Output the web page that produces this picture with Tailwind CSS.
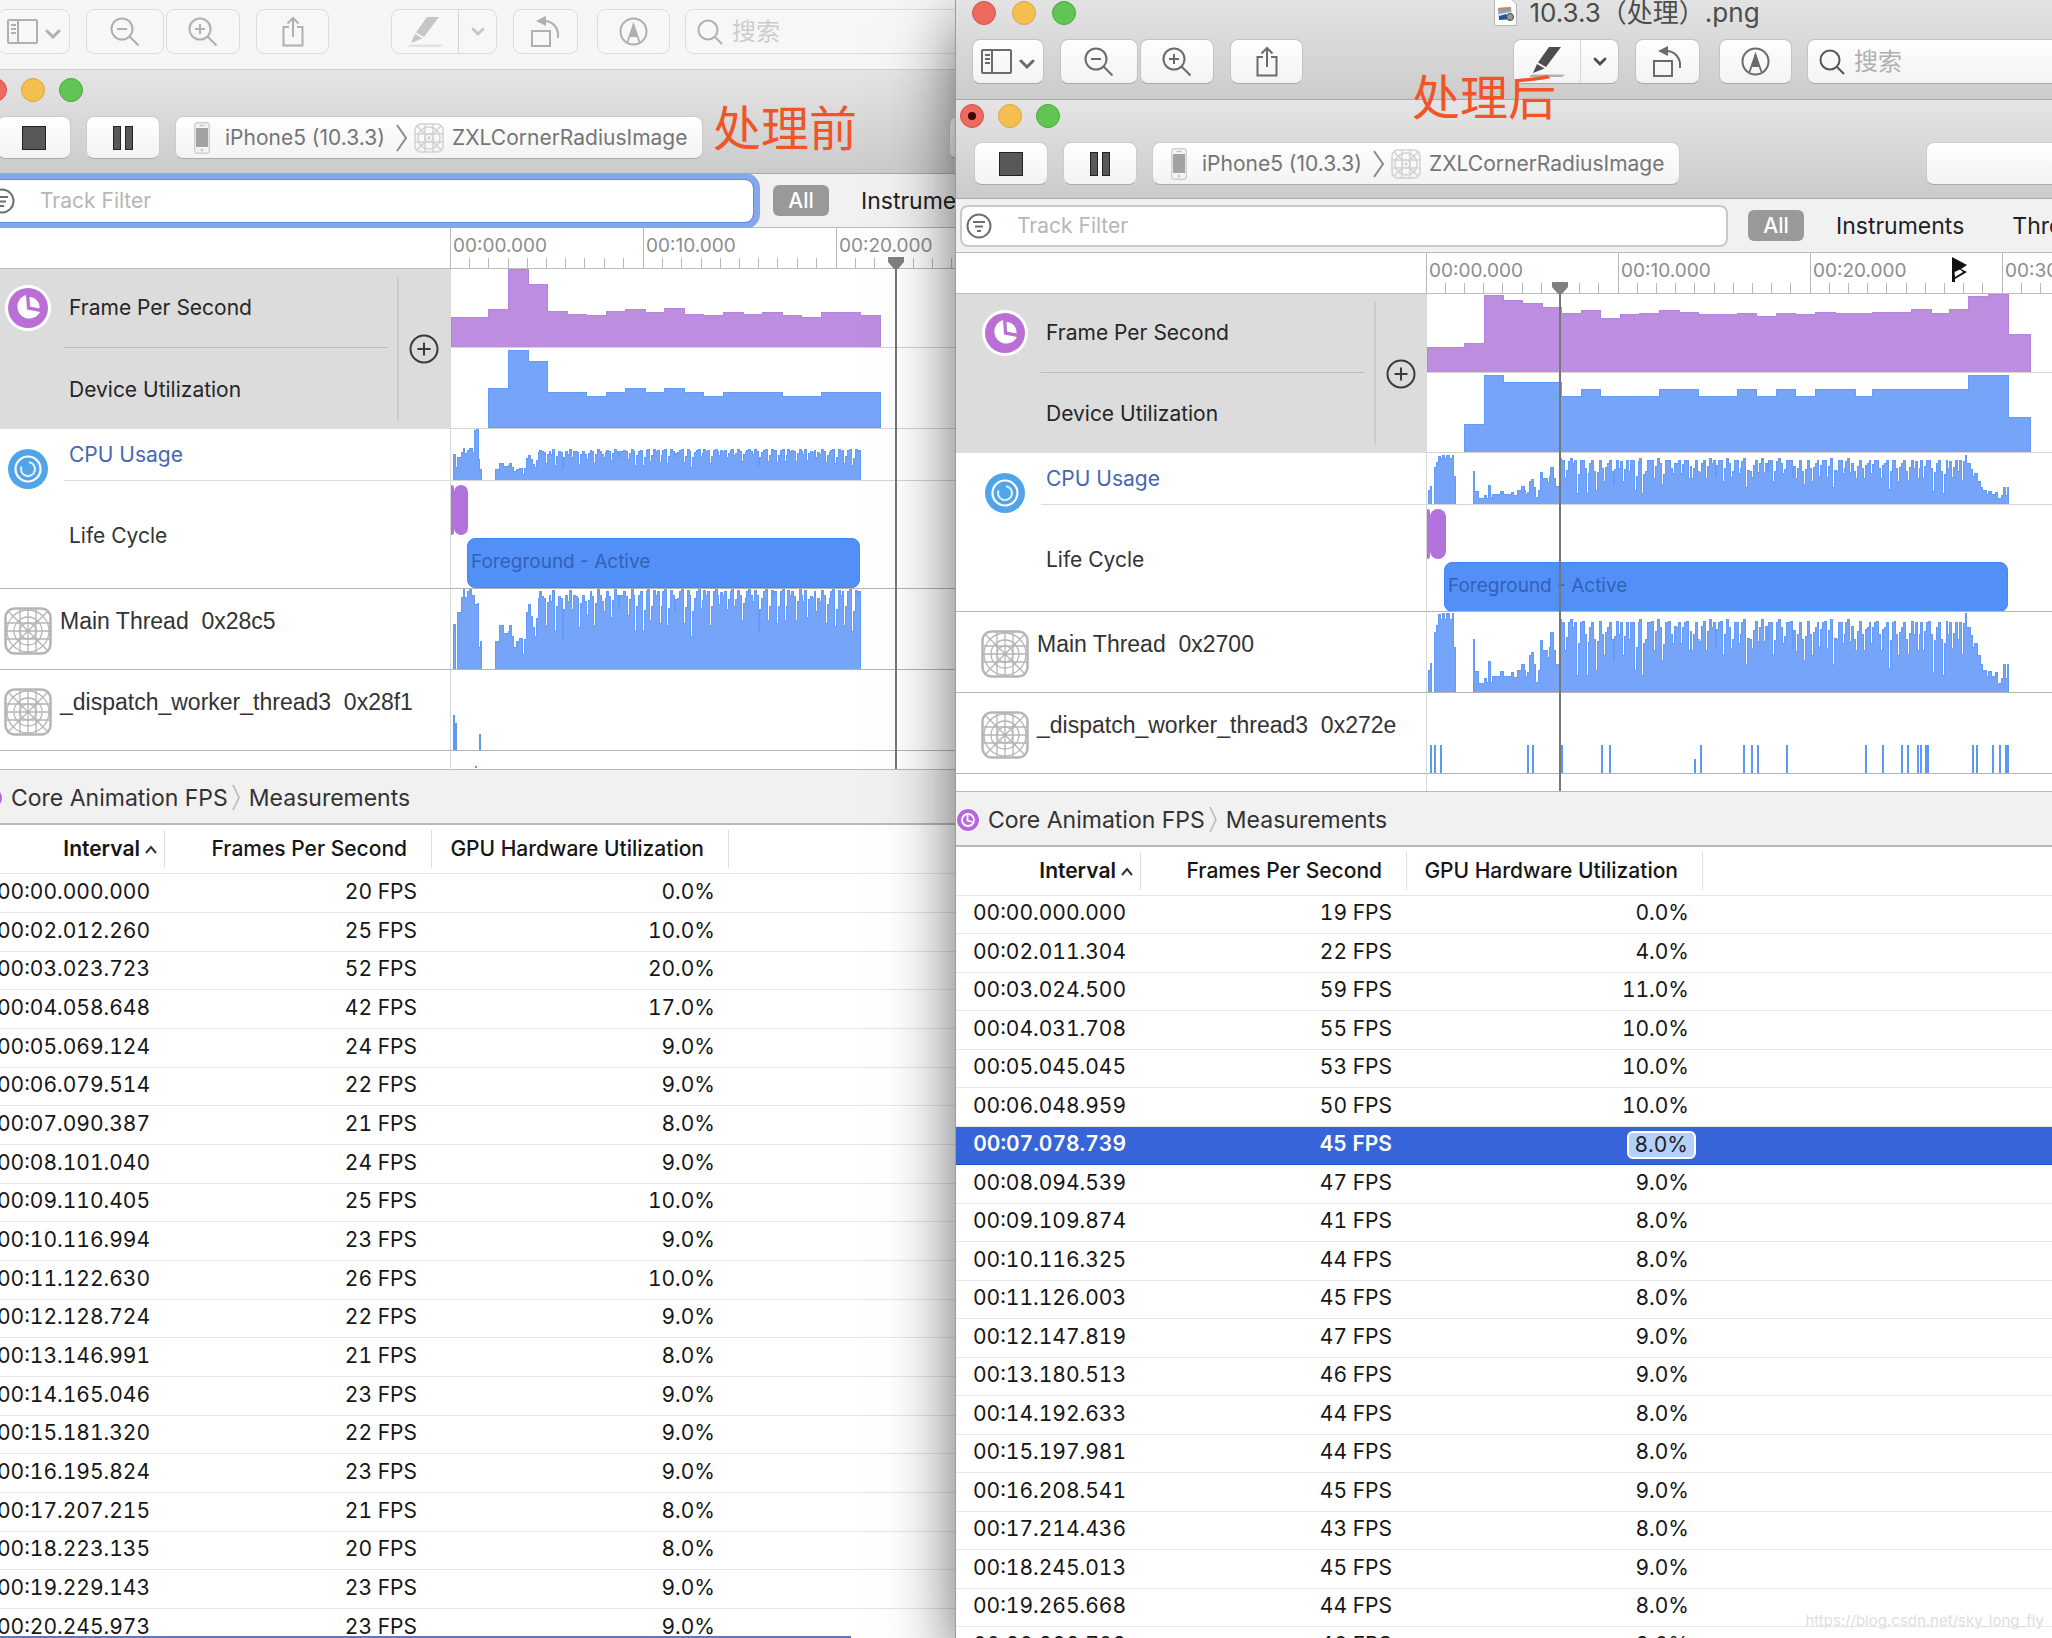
<!DOCTYPE html>
<html lang="zh-CN">
<head>
<meta charset="utf-8">
<meta name="viewport" content="width=device-width, initial-scale=1">
<title>10.3.3（处理）.png</title>
<script src="https://cdn.jsdelivr.net/npm/@tailwindcss/browser@4"></script>
</head>
<body class="bg-white font-['Inter','Noto_Sans_CJK_SC',sans-serif] text-[21px] leading-6 text-[#262626]">

<!-- Shared icons -->
<svg class="hidden" aria-hidden="true">
  <symbol id="i-sidebar" viewBox="0 0 54 26"><g fill="none" stroke="currentColor" stroke-width="2"><rect x="1" y="1" width="29" height="23" rx="1"/><path d="M11 1V24M4 6h5M4 10h5M4 14h5" /><path d="M40 12l6 6 6-6" stroke-width="3" stroke-linecap="round"/></g></symbol>
  <symbol id="i-zoomout" viewBox="0 0 30 30"><g fill="none" stroke="currentColor" stroke-width="2"><circle cx="12" cy="12" r="10.5"/><path d="M7 12h10M19.500 19.500L28.500 28.500" /></g></symbol>
  <symbol id="i-zoomin" viewBox="0 0 30 30"><g fill="none" stroke="currentColor" stroke-width="2"><circle cx="12" cy="12" r="10.500"/><path d="M7 12h10M12 7v10M19.500 19.500L28.500 28.500"/></g></symbol>
  <symbol id="i-search" viewBox="0 0 26 26"><g fill="none" stroke="currentColor" stroke-width="2"><circle cx="11" cy="11" r="9.500"/><path d="M17.500 17.500L25 25"/></g></symbol>
  <symbol id="i-share" viewBox="0 0 22 31"><path d="M7 11H1.500V29.500H20.500V11H15M11 21V2M5.500 7.500L11 2L16.500 7.500" fill="none" stroke="currentColor" stroke-width="2"/></symbol>
  <symbol id="i-marker" viewBox="0 0 36 30"><path d="M20 0H32L17 20L9 15.500Z" fill="currentColor"/><path d="M8 17L15.500 21.500L4 26Z" fill="currentColor"/><path d="M3 27.500H36L33 30H0Z" fill="currentColor" opacity=".4"/></symbol>
  <symbol id="i-down" viewBox="0 0 14 9"><path d="M2 2l5 5 5-5" fill="none" stroke="currentColor" stroke-width="2.800" stroke-linecap="round"/></symbol>
  <symbol id="i-rotate" viewBox="0 0 29 31"><g fill="none" stroke="currentColor" stroke-width="2"><rect x="1" y="15" width="18" height="15"/><path d="M13 5C22 5 28 12 27 22"/></g><path d="M5 5L15 0V10Z" fill="currentColor"/></symbol>
  <symbol id="i-markup" viewBox="0 0 29 29"><g fill="none" stroke="currentColor" stroke-width="2"><circle cx="14.500" cy="14.500" r="13"/><path d="M8.500 25L14.500 8L20.500 25M11 19H18" stroke-width="1.800"/></g><path d="M14.500 5L18.500 19H10.500Z" fill="currentColor"/></symbol>
  <symbol id="i-filter" viewBox="0 0 26 26"><g fill="none" stroke="currentColor" stroke-width="2"><circle cx="13" cy="13" r="11.500"/><path d="M7 9h12M9 13.500h8M11 18h4"/></g></symbol>
  <symbol id="i-phone" viewBox="0 0 16 32"><rect x=".7" y=".7" width="14.600" height="30.600" rx="3" fill="#f4f4f4" stroke="#cfcfcf" stroke-width="1.400"/><rect x="2" y="6" width="12" height="19" fill="#a2a2a2"/><path d="M5.500 3.500h5" stroke="#bbb" stroke-width="1.200"/><circle cx="8" cy="28" r="1.500" fill="#ccc"/></symbol>
  <symbol id="i-app" viewBox="0 0 48 48"><g fill="none" stroke="currentColor"><rect x="1.500" y="1.500" width="45" height="45" rx="9" stroke-width="2.500"/><g stroke-width="1.300"><path d="M16 1V47M24 1V47M32 1V47M1 16H47M1 24H47M1 32H47M4 4L44 44M44 4L4 44"/><circle cx="24" cy="24" r="21"/><circle cx="24" cy="24" r="14"/><circle cx="24" cy="24" r="8"/></g></g></symbol>
  <symbol id="i-appsmall" viewBox="0 0 30 30"><g fill="none" stroke="currentColor" stroke-width="1.500"><rect x="1" y="1" width="28" height="28" rx="6"/><path d="M11 1V29M19 1V29M1 11H29M1 19H29M3 3L10 10M27 3L20 10M3 27L10 20M27 27L20 20"/><circle cx="15" cy="15" r="11"/><circle cx="15" cy="15" r="4"/><circle cx="15" cy="15" r="1"/></g></symbol>
  <symbol id="i-fps" viewBox="0 0 46 46"><circle cx="23" cy="23" r="23" fill="#fff"/><circle cx="23" cy="23" r="20" fill="#bb6fd6"/><path d="M21 10A12 12 0 1 0 35 27L22 24.500Z" fill="#fff"/><path d="M24.500 12A10.500 10.500 0 0 1 34.500 23.500L25 21.500Z" fill="#fff"/></symbol>
  <symbol id="i-fpssmall" viewBox="0 0 24 24"><circle cx="12" cy="12" r="12" fill="#fff"/><circle cx="12" cy="12" r="11" fill="#b768dc"/><circle cx="12" cy="12" r="6" fill="none" stroke="#fff" stroke-width="1.800"/><path d="M11.500 6.500V12.500L16.500 14" fill="none" stroke="#fff" stroke-width="1.800"/></symbol>
  <symbol id="i-cpu" viewBox="0 0 40 40"><circle cx="20" cy="20" r="20" fill="#52a4e9"/><g fill="none" stroke="#fff"><circle cx="20" cy="20" r="12.500" stroke-width="2.200"/><path d="M13.500 17.500A7 7 0 1 0 21 13.200" stroke-width="2" opacity=".85"/></g></symbol>
  <symbol id="i-plus" viewBox="0 0 30 30"><g fill="none" stroke="currentColor" stroke-width="2"><circle cx="15" cy="15" r="13.500"/><path d="M8.500 15h13M15 8.500v13"/></g></symbol>
</svg>

<main class="grid h-screen grid-cols-[956fr_1096fr] grid-rows-[minmax(0,1fr)] overflow-hidden">
  <section id="before" class="relative flex min-w-0 flex-col overflow-hidden bg-white" aria-label="处理前"></section>
  <section id="after" class="relative z-10 flex min-w-0 flex-col bg-white shadow-[0_24px_64px_rgba(0,0,0,0.6)] ring-1 ring-[#9a9a9a]" aria-label="处理后"></section>
</main>

<script>
const icon = (id, cls) => `<svg class="${cls}" aria-hidden="true"><use href="#${id}"/></svg>`;

// ---- Preview toolbar -------------------------------------------------
function previewBar(active) {
  const btn = active
    ? 'flex h-[45px] shrink-0 items-center justify-center rounded-lg border border-[#c3c3c3] border-b-[#a9a9a9] bg-linear-to-b from-[#fefefe] to-[#f3f3f3] text-[#6b6b6b]'
    : 'flex h-[45px] shrink-0 items-center justify-center rounded-lg border border-[#dcdcdc] bg-[#f7f7f7] text-[#b0b0b0]';
  const dark = active ? 'text-[#4d4d4d]' : 'text-[#c6c6c6]';
  return `
  <div class="flex items-center ${active ? 'pl-4' : '-ml-0.5'}">
    <button aria-label="边栏" class="${btn} w-[72px]">${icon('i-sidebar', 'h-[26px] w-[54px]')}</button>
    <button aria-label="缩小" class="${btn} ml-4 w-[78px]">${icon('i-zoomout', 'size-[30px]')}</button>
    <button aria-label="放大" class="${btn} ml-0.5 w-[74px]">${icon('i-zoomin', 'size-[30px]')}</button>
    <button aria-label="共享" class="${btn} ml-4 w-[73px]">${icon('i-share', 'h-[31px] w-[22px]')}</button>
    <div class="${btn} ${active ? 'ml-[210px]' : 'ml-[62px]'} w-[106px]">
      <button aria-label="高亮" class="flex h-full w-[67px] items-center justify-center border-r border-[#d6d6d6] ${dark}">${icon('i-marker', 'h-[30px] w-[36px]')}</button>
      <button aria-label="高亮颜色" class="flex h-full flex-1 items-center justify-center ${dark}">${icon('i-down', 'h-[9px] w-[14px]')}</button>
    </div>
    <button aria-label="旋转" class="${btn} ml-4 w-[65px]">${icon('i-rotate', 'h-[31px] w-[29px]')}</button>
    <button aria-label="标记" class="${btn} ml-[19px] w-[73px]">${icon('i-markup', 'size-[29px]')}</button>
    <label class="${btn} relative ml-[15px] w-[400px] justify-start gap-[9px] pl-[11px] ${active ? 'text-[#555555]' : 'text-[#aaaaaa]'}">
      ${icon('i-search', 'size-[26px] shrink-0')}
      <input type="search" placeholder="搜索" class="w-full bg-transparent text-[24px] outline-none ${active ? 'placeholder:text-[#b0b0b0]' : 'placeholder:text-[#cccccc]'}">
    </label>
  </div>`;
}

// ---- Track graphs ----------------------------------------------------
// points: [x, height]; the last point closes the area.
function steps(points, base) {
  let d = `M${points[0][0]} ${base}`;
  points.forEach(([x, h], i) => {
    d += `V${(base - h).toFixed(1)}`;
    if (points[i + 1]) d += `H${points[i + 1][0].toFixed(1)}`;
  });
  return d + `V${base}Z`;
}
const area = (d, fill, stroke) =>
  `<svg class="block h-full w-full" aria-hidden="true"><path d="${d}" fill="${fill}" stroke="${stroke}" shape-rendering="crispEdges"/></svg>`;

function spread(valleys, from, to, step, base, high) {
  const out = [];
  let n = 0;
  for (let x = from; x < to; x += step) {
    const v = valleys.find(([vx]) => Math.abs(vx - x) <= step / 2);
    const after = valleys.find(([vx]) => x - vx > step / 2 && x - vx <= step * 1.5);
    if (v) out.push([x, base - v[1]]);
    else if (after) out.push([x, base - (high[n % high.length] + after[1]) / 2 + 14]);
    else out.push([x, base - high[n % high.length]]);
    n++;
  }
  return out;
}

// Load samples, in graph units
const loadBefore = (() => {
  const head = [[168,1158],[178,1112],[190,1135],[206,1128],[210,1112],[214,1145],[222,1175],[231,1158],[238,1150],[247,1198],[255,1152],[261,1072],[266,1050],[271,1085],[278,1118],[284,1145],[289,1090],[295,1032]].map(([x, y]) => [x, 1240 - y]);
  const valleys = [[315,1110],[344,1130],[366,1152],[396,1065],[418,1117],[442,1082],[465,1110],[488,1070],[511,1088],[538,1065],[565,1082],[587,1130],[610,1130],[633,1095],[656,1105],[680,1112],[705,1070],[731,1105],[755,1145],[783,1060],[807,1110],[835,1050],[858,1065],[882,1055],[906,1095],[957,1130],[983,1095],[1009,1105],[1036,1095],[1068,1095],[1102,1088],[1131,1070],[1155,1105],[1184,1115],[1212,1110],[1236,1130]];
  const pts = head.concat(spread(valleys, 300, 1258, 5.6, 1240, [1010, 1024, 1030, 1012, 1003, 1022, 1040, 1008, 1022]));
  pts.push([1261, 0]);
  return pts.map(([x, h]) => [(x - 34) / 3, h / 2.958]);
})();
const startBefore = [[40,1107],[46,1240],[52,1072],[64,1028],[70,1005],[75,1028],[82,1010],[88,1003],[96,1022],[104,1050],[112,1045],[116,1175],[121,1158],[125,1240]].map(([x, y]) => [(x - 34) / 3, (1240 - y) / 2.958]);
const startBeforeCpu = [[40,605],[46,645],[52,615],[64,600],[70,590],[75,602],[82,596],[88,590],[98,600],[105,535],[111,530],[115,622],[120,650],[125,682]].map(([x, y]) => [(x - 34) / 3, (682 - y) / 2.958]);

const loadAfter = (() => {
  const px = ([x, h]) => [(x - 42) / 2.442, h / 2.8];
  const head = [[155,1120],[158,1208],[167,1243],[182,1228],[187,1240],[193,1180],[197,1238],[203,1222],[222,1208],[228,1222],[248,1212],[254,1226],[262,1205],[272,1188],[279,1205],[283,1222],[288,1212],[292,1165],[297,1155],[301,1190],[307,1238],[313,1205],[318,1122],[325,1150],[335,1170],[340,1140],[343,1100],[350,1150],[356,1188],[366,1062],[371,1070]].map(([x, y]) => [x, 1266 - y]);
  const valleys = [[381,1150],[405,1220],[429,1220],[452,1205],[475,1165],[496,1180],[520,1165],[546,1205],[569,1220],[593,1150],[616,1178],[640,1130],[663,1130],[678,1150],[690,1150],[706,1125],[722,1150],[745,1140],[762,1165],[785,1145],[800,1130],[819,1190],[835,1145],[850,1125],[864,1125],[888,1165],[911,1130],[932,1145],[943,1152],[962,1178],[980,1165],[1000,1140],[1017,1145],[1034,1190],[1055,1130],[1074,1125],[1090,1150],[1107,1150],[1128,1130],[1149,1150],[1169,1200],[1190,1165],[1213,1160],[1237,1150],[1255,1150],[1278,1210],[1301,1220],[1325,1145],[1347,1160]];
  const tail = [[1353,1075],[1357,1045],[1360,1085],[1368,1108],[1373,1140],[1379,1130],[1385,1165],[1393,1190],[1398,1206],[1405,1205],[1409,1222],[1414,1208],[1420,1222],[1430,1212],[1434,1242],[1446,1228],[1450,1190],[1454,1228],[1459,1190],[1462,1266]].map(([x, y]) => [x, 1266 - y]);
  return head.concat(spread(valleys, 374, 1352, 4.7, 1266, [1070, 1068, 1105, 1072, 1062, 1085, 1070, 1118, 1070]), tail).map(px);
})();
const startAfter = [[46,1205],[50,1185],[54,1266],[60,1100],[66,1080],[70,1050],[75,1062],[80,1045],[85,1062],[90,1045],[96,1062],[103,1045],[106,1142],[111,1266]].map(([x, y]) => [(x - 42) / 2.442, (1266 - y) / 2.8]);

const BLUE = '#75a4f8', BLUE_EDGE = '#629bfa', PURPLE = '#bd8de0', PURPLE_EDGE = '#b783dd';

const before = {
  active: false, pxPerSec: 19.3, fpsUnit: 1.5, gpuUnit: 3.85, end: 22.3,
  rows: [[0,'00:00.000.000',20,0],[2.012,'00:02.012.260',25,10],[3.024,'00:03.023.723',52,20],[4.059,'00:04.058.648',42,17],[5.069,'00:05.069.124',24,9],[6.08,'00:06.079.514',22,9],[7.09,'00:07.090.387',21,8],[8.101,'00:08.101.040',24,9],[9.11,'00:09.110.405',25,10],[10.117,'00:10.116.994',23,9],[11.123,'00:11.122.630',26,10],[12.129,'00:12.128.724',22,9],[13.147,'00:13.146.991',21,8],[14.165,'00:14.165.046',23,9],[15.181,'00:15.181.320',22,9],[16.196,'00:16.195.824',23,9],[17.207,'00:17.207.215',21,8],[18.223,'00:18.223.135',20,8],[19.229,'00:19.229.143',23,9],[20.246,'00:20.245.973',23,9]],
  later: [[21.25, 21, 9]],
  start: startBefore, startCpu: startBeforeCpu, load: loadBefore, cpuScale: 0.385,
  main: '0x28c5', worker: '0x28f1',
  workerBars: [[2, 35, 2], [4, 27, 2], [28, 16, 2]], nextBars: [[24, 2, 2]],
  purpleW: 'w-[14px]', fgMl: 'ml-4', fgW: 'w-[393px]',
  playhead: 'left-[909px]', ticks: 'w-[193px]', side: 'w-[471px]', cols: 'grid-cols-[471px_1fr]',
  grid: 'grid-rows-[79px_81px_52px_108px_81px_81px_18px]',
  title: 'h-[104px] pt-[8px]', shift: '-ml-[21px]', rowH: 'h-[39px] nth-[3n]:h-[38px]',
  colW: ['w-[186px]', 'w-[267px]', 'w-[297px]'],
};
const after = {
  active: true, pxPerSec: 19.2, fpsUnit: 1.3, gpuUnit: 7, end: 31.5,
  rows: [[0,'00:00.000.000',19,0],[2.011,'00:02.011.304',22,4],[3.025,'00:03.024.500',59,11],[4.032,'00:04.031.708',55,10],[5.045,'00:05.045.045',53,10],[6.049,'00:06.048.959',50,10],[7.079,'00:07.078.739',45,8],[8.095,'00:08.094.539',47,9],[9.11,'00:09.109.874',41,8],[10.116,'00:10.116.325',44,8],[11.126,'00:11.126.003',45,8],[12.148,'00:12.147.819',47,9],[13.181,'00:13.180.513',46,9],[14.193,'00:14.192.633',44,8],[15.198,'00:15.197.981',44,8],[16.209,'00:16.208.541',45,9],[17.214,'00:17.214.436',43,8],[18.245,'00:18.245.013',45,9],[19.266,'00:19.265.668',44,8],[20.283,'00:20.282.708',46,9]],
  later: [[21.35, 45, 9], [22.37, 45, 8], [23.26, 46, 9], [25.27, 48, 9], [26.35, 45, 9], [27.27, 48, 9], [28.27, 58, 11], [29.3, 60, 11], [30.34, 29, 5]],
  selected: 6,
  start: startAfter, load: loadAfter, cpuScale: 0.62,
  main: '0x2700', worker: '0x272e',
  workerBars: [52,62,76,288,301,371,470,489,710,817,836,851,921,1113,1156,1202,1217,1240,1249,1260,1376,1385,1423,1442,1457].map(x => [Math.round((x - 42) / 2.442) - 1, 28, x === 1260 || x === 1457 ? 4 : 2]).concat([[267, 14, 2]]),
  nextBars: [],
  purpleW: 'w-[16px]', fgMl: 'ml-[17px]', fgW: 'w-[564px]',
  playhead: 'left-[596px]', ticks: 'w-[192px]', side: 'w-[470px]', cols: 'grid-cols-[470px_1fr]',
  grid: 'grid-rows-[79px_80px_52px_107px_81px_81px_17px]',
  title: 'h-[99px] pt-[4px]', shift: 'ml-0', rowH: 'h-[39px] odd:h-[38px]',
  colW: ['w-[185px]', 'w-[266px]', 'w-[296px]'],
};

function instruments(w) {
  const all = w.rows.map(r => [r[0], r[2], r[3]]).concat(w.later);
  const series = (k, unit) => all.filter(r => r[k] > 0).map(r => [Math.max(0, r[0] * w.pxPerSec - 1), Math.min(r[k] * unit, 78)]).concat([[w.end * w.pxPerSec - 1, 0]]);
  const light = (c, extra = '') => `<span class="relative flex size-6 items-center justify-center rounded-full border ${c}">${extra}</span>`;
  const toolBtn = 'flex h-[43px] shrink-0 items-center rounded-lg border border-[#cccccc] border-b-[#ababab] bg-linear-to-b from-[#ffffff] to-[#f3f3f3]';
  const cell = 'overflow-hidden border-b border-[#d4d4d4] border-l border-l-[#d8d8d8]';
  const strong = 'overflow-hidden border-b border-[#b4b4b4] border-l border-l-[#d8d8d8]';
  const bars = list => `<svg class="block h-full w-full" aria-hidden="true"><g transform="translate(0 ${list === w.nextBars ? 17 : 80})" fill="#5d97f8">${list.map(([x, h, b]) => `<rect x="${x}" y="${-h}" width="${b}" height="${h}"/>`).join('')}</g></svg>`;
  const thread = (name, id) => `
    <div class="flex items-start gap-2 border-b border-[#b4b4b4] pl-[25px] pt-[18px] font-['Liberation_Sans',Arial,sans-serif] text-[23px] text-[#333333]">
      ${icon('i-app', 'size-12 shrink-0 text-[#b5b5b5]')}<span class="whitespace-pre pt-0.5">${name}  ${id}</span>
    </div>`;
  return `
  <div class="${w.title} flex shrink-0 flex-col gap-[14px] border-b border-[#a8a8a8] bg-linear-to-b from-[#e5e5e5] to-[#cbcbcb]">
    <div class="flex gap-[14px] pl-1">
      ${light('border-[#d5534a] bg-[#ec6a5e]', w.active ? '<span class="size-2 rounded-full bg-[#3a0806]"></span>' : '')}
      ${light('border-[#dba43c] bg-[#f5bf4f]')}
      ${light('border-[#4ca83d] bg-[#61c554]')}
    </div>
    <div class="flex items-center pl-[18px]">
      <button aria-label="Stop" class="${toolBtn} w-[74px] justify-center"><span class="size-6 border border-[#222222] bg-[#585858]"></span></button>
      <button aria-label="Pause" class="${toolBtn} ml-[15px] w-[74px] justify-center gap-1"><span class="h-6 w-2 border border-[#222222] bg-[#585858]"></span><span class="h-6 w-2 border border-[#222222] bg-[#585858]"></span></button>
      <button class="${toolBtn} ml-[15px] w-[528px] whitespace-nowrap pl-[18px] text-[#757575]">
        ${icon('i-phone', 'h-8 w-4 shrink-0')}<span class="ml-[15px] w-[167px] text-left">iPhone5 (10.3.3)</span>
        <svg class="ml-1 h-[28px] w-[12px] shrink-0" aria-hidden="true"><path d="M1 1L10 14L1 27" fill="none" stroke="#8a8a8a" stroke-width="2"/></svg>
        ${icon('i-appsmall', 'ml-[6px] size-[30px] shrink-0 text-[#d2d2d2]')}<span class="ml-2">ZXLCornerRadiusImage</span>
      </button>
      <div class="${toolBtn} ml-[246px] w-[400px]"></div>
    </div>
  </div>
  <div class="flex h-[54px] shrink-0 items-center border-b border-[#b9b9b9] bg-[#f1f1f1] text-[#222222]">
    <label class="flex h-[42px] shrink-0 items-center bg-white ${w.active ? 'ml-1 w-[768px] rounded-lg border-2 border-[#c9c9c9] pl-1' : 'ml-1 w-[770px] rounded-lg pl-[6px] ring-7 ring-[#85a8ec] outline-1 outline-[#5f8de2]'}">
      ${icon('i-filter', 'size-[26px] shrink-0 text-[#6e6e6e]')}
      <input type="text" placeholder="Track Filter" aria-label="Track Filter" class="ml-[25px] w-full bg-transparent outline-none placeholder:text-[#b6b6b6]">
    </label>
    <button class="ml-5 h-[31px] w-[56px] shrink-0 rounded-md bg-[#999999] font-medium text-white">All</button>
    <button class="ml-8 shrink-0 text-[23px]">Instruments</button>
    <button class="ml-12 shrink-0 text-[23px]">Threads</button>
  </div>
  <div class="relative shrink-0 overflow-hidden">
    <div class="flex h-[41px] border-b border-[#bdbdbd] bg-white">
      <div class="${w.side} shrink-0"></div>
      ${['00:00.000', '00:10.000', '00:20.000', '00:30.000'].map(t => `
      <div class="${w.ticks} flex shrink-0 flex-col justify-between border-l border-[#b9b9b9]">
        <span class="pl-[2px] pt-[6px] text-[19px] text-[#8d8d8d]">${t}</span>
        <div class="grid h-[10px] grid-cols-10">${'<i class="border-r border-[#b9b9b9] last:border-0"></i>'.repeat(10)}</div>
      </div>`).join('')}
    </div>
    <div class="grid ${w.cols} ${w.grid}">
      <div class="row-span-2 flex bg-[#dcdcdc]">
        <div class="w-[85px] shrink-0 pl-[26px] pt-[16px]">${icon('i-fps', 'size-[46px]')}</div>
        <div class="flex w-[324px] shrink-0 flex-col">
          <div class="flex h-[79px] items-center border-b border-[#bcbcbc] pl-[5px]">Frame Per Second</div>
          <div class="flex flex-1 items-center pl-[5px] pt-0.5">Device Utilization</div>
        </div>
        <div class="my-2 ml-[9px] w-0.5 bg-[#cccccc]"></div>
        <button aria-label="Add" class="ml-[10px] text-[#3a3a3a]">${icon('i-plus', 'size-[30px]')}</button>
      </div>
      <div class="${cell}">${area(steps(series(1, w.fpsUnit), 78), PURPLE, PURPLE_EDGE)}</div>
      <div class="${cell}">${area(steps(series(2, w.gpuUnit), 79), BLUE, BLUE_EDGE)}</div>
      <div class="row-span-2 flex border-b border-[#b4b4b4]">
        <div class="w-[85px] shrink-0 pl-[29px] pt-[20px]">${icon('i-cpu', 'size-[40px]')}</div>
        <div class="flex flex-1 flex-col">
          <div class="flex h-[52px] items-center border-b border-[#dcdcdc] pl-[5px] text-[#4468b4]">CPU Usage</div>
          <div class="flex flex-1 items-center pl-[5px] pt-[3px] text-[#333333]">Life Cycle</div>
        </div>
      </div>
      <div class="${cell}">${area(steps((w.startCpu || w.start.map(([x, h]) => [x, h * w.cpuScale])), 51) + steps(w.load.map(([x, h]) => [x, h * w.cpuScale]), 51), BLUE, BLUE_EDGE)}</div>
      <div class="${strong} pt-1">
        <div class="flex h-[50px]"><span class="w-[3px] rounded-r-full bg-[#b272dc]"></span><span class="${w.purpleW} rounded-lg bg-[#b272dc]"></span></div>
        <div class="${w.fgMl} ${w.fgW} mt-[3px] flex h-[50px] items-center rounded-lg border border-[#3d88fb] bg-[#5290f8] pb-0.5 pl-[3px] text-[19px] text-[#3362b4]">Foreground - Active</div>
      </div>
      ${thread('Main Thread', w.main)}
      <div class="${strong}">${area(steps(w.start, 80) + steps(w.load, 80), BLUE, BLUE_EDGE)}</div>
      ${thread('_dispatch_worker_thread3', w.worker)}
      <div class="${strong}">${bars(w.workerBars)}</div>
      <div></div>
      <div class="overflow-hidden border-l border-[#d8d8d8]">${bars(w.nextBars)}</div>
    </div>
    <div class="absolute bottom-0 top-[29px] flex w-4 flex-col items-center ${w.playhead}">
      <svg class="h-3 w-4 shrink-0" viewBox="0 0 16 12" aria-hidden="true"><path d="M0 0H16V5L10 12H6L0 5Z" fill="#808080"/></svg>
      <span class="w-0.5 flex-1 bg-[#767676]"></span>
    </div>
    ${w.active ? '<svg class="absolute left-[996px] top-1 h-[26px] w-[16px]" viewBox="0 0 16 26" aria-hidden="true"><path d="M0 0L15 8L9 12L15 15L3 22V25H0Z" fill="#111"/><path d="M2.500 15L8 12.500L11 15L3 20Z" fill="#fff"/></svg>' : ''}
  </div>
  <div class="flex h-[56px] shrink-0 items-center border-b-2 border-t border-[#b9b9b9] bg-[#f1f1f1] pt-0.5 text-[23px] text-[#333333]">
    ${icon('i-fpssmall', 'size-6 shrink-0')}<span class="ml-2 whitespace-nowrap">Core Animation FPS</span>
    <svg class="ml-1 h-[27px] w-[9px] shrink-0" aria-hidden="true"><path d="M1 1L7 13.500L1 26" fill="none" stroke="#b5b5b5" stroke-width="1.500"/></svg>
    <span class="ml-2">Measurements</span>
  </div>
  <table class="w-full table-fixed border-collapse text-[21px] tabular-nums text-[#161616]">
    <colgroup><col class="${w.colW[0]}"><col class="${w.colW[1]}"><col class="${w.colW[2]}"><col></colgroup>
    <thead><tr class="h-[48px] border-b border-[#e6e6e6]">
      <th scope="col" class="p-0"><div class="flex h-[38px] items-center justify-end gap-1 border-r border-[#dfdfdf] pr-[6px] pt-px font-semibold">Interval<svg class="h-[9px] w-[14px]" aria-hidden="true"><path d="M2 8L7 2L12 8" fill="none" stroke="#333" stroke-width="2"/></svg></div></th>
      <th scope="col" class="p-0"><div class="flex h-[38px] items-center justify-end border-r border-[#dfdfdf] pr-[24px] pt-px font-medium">Frames Per Second</div></th>
      <th scope="col" class="p-0"><div class="flex h-[38px] items-center justify-end whitespace-nowrap border-r border-[#dfdfdf] pr-[24px] pt-px font-medium">GPU Hardware Utilization</div></th>
      <td></td>
    </tr></thead>
    <tbody>${w.rows.map((r, i) => {
      const sel = i === w.selected;
      return `<tr class="${w.rowH} border-b ${sel ? 'border-[#1d50cf] bg-[#3764d9] font-semibold text-white' : 'border-[#e6e6e6]'}">
        <td class="whitespace-nowrap p-0 pb-0.5 pr-[15px] text-right">${r[1]}</td>
        <td class="p-0 pb-0.5 pr-[15px] text-right">${r[2]} FPS</td>
        <td class="p-0 text-right ${sel ? 'pr-[7px]' : 'pb-0.5 pr-[14px]'}">${sel ? `<span class="inline-block rounded-md border-2 border-white bg-[#b3d1fb] px-[6px] font-normal text-[#222222]">${r[3]}.0%</span>` : `${r[3]}.0%`}</td>
        <td></td></tr>`;
    }).join('')}</tbody>
  </table>`;
}

document.getElementById('before').innerHTML = `
  <div class="flex h-[70px] shrink-0 flex-col border-b border-[#cfcfcf] bg-[#f6f6f6] pt-[9px]">${previewBar(false)}</div>
  <div class="flex min-h-0 flex-1 flex-col ${before.shift}">${instruments(before)}</div>
  <p class="absolute left-[713px] top-[99px] text-[48px] leading-[60px] text-[#f15426]">处理前</p>
  <div class="absolute bottom-0 left-0 h-0.5 w-[89%] bg-[#6079b4]"></div>`;

document.getElementById('after').innerHTML = `
  <div class="flex h-[100px] shrink-0 flex-col gap-[14px] border-b border-[#a8a8a8] bg-linear-to-b from-[#e3e3e3] to-[#cccccc]">
    <div class="relative flex h-[25px] items-center justify-center">
      <div class="absolute left-4 flex gap-4">
        <span class="size-6 rounded-full border border-[#d5534a] bg-[#ec6a5e]"></span>
        <span class="size-6 rounded-full border border-[#dba43c] bg-[#f5bf4f]"></span>
        <span class="size-6 rounded-full border border-[#4ca83d] bg-[#61c554]"></span>
      </div>
      <svg class="ml-[246px] h-[27px] w-[23px] shrink-0" viewBox="0 0 23 27" aria-hidden="true"><path d="M.5 -2H15L22.500 5V26.500H.5Z" fill="#fff" stroke="#b4b4b4"/><path d="M4 9L17 8L18 20L5 21Z" fill="#7ea6dc"/><path d="M4 9L17 8V11L4 12Z" fill="#b6935e"/><path d="M5 15L17 13V16L5 18Z" fill="#f0f0f0"/><path d="M5 17L12 15L16 20L5 21Z" fill="#2a52a0"/><circle cx="16" cy="18" r="3.500" fill="#999" stroke="#444"/></svg>
      <h1 class="ml-3 whitespace-nowrap text-[26px] text-[#4c4c4c]">10.3.3（处理）.png</h1>
    </div>
    ${previewBar(true)}
  </div>
  <div class="flex min-h-0 min-w-0 flex-1 flex-col overflow-hidden">${instruments(after)}</div>
  <p class="absolute left-[456px] top-[68px] text-[48px] leading-[60px] text-[#f15426]">处理后</p>
  <p class="absolute bottom-[5px] right-2 text-[15px] text-[#dedede]">https://blog.csdn.net/sky_long_fly</p>`;
</script>
</body>
</html>
